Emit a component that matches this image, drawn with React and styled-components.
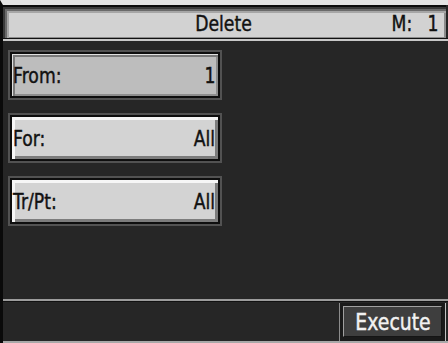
import React from "react";
import styled, { createGlobalStyle } from "styled-components";

const Global = createGlobalStyle`
  html, body { margin: 0; padding: 0; background: #e6e6e6; }
  body { font-family: "DejaVu Sans", "Liberation Sans", sans-serif; }
`;

const Screen = styled.div`
  width: 448px;
  height: 343px;
  box-sizing: border-box;
  border-top: 5px solid #e4e4e4;
  border-left: 3px solid #0a0a0a;
  background: #262626;
  display: flex;
  flex-direction: column;
  overflow: hidden;
`;

const Narrow = styled.span`
  display: inline-block;
  transform: scaleX(0.82);
  transform-origin: ${(p) => p.$origin || "center"};
  white-space: nowrap;
  -webkit-text-stroke: 0.45px currentColor;
`;

const Header = styled.div`
  height: 33px;
  box-sizing: border-box;
  margin-right: 2px;
  border-top: 2px solid #0c0c0c;
  background: #d2d2d2;
  box-shadow: inset 2px 2px 0 #3a3a3a, inset 4px 4px 0 #6a6a6a,
    inset 6px 6px 0 #a6a6a6, inset -2px -1px 0 #8c8c8c;
  display: grid;
  grid-template-columns: 1fr auto 1fr;
  align-items: center;
  padding: 3px 8px 0 6px;
  color: #111;
  font-size: 21px;
  line-height: 1;
`;

const Title = styled.div`
  grid-column: 2;
`;

const Measure = styled.div`
  grid-column: 3;
  justify-self: end;
  display: flex;
  gap: 12px;
`;

const HeaderRule = styled.div`
  height: 3px;
  box-sizing: border-box;
  border-top: 1px solid #111;
  border-bottom: 2px solid #c8c8c8;
  margin-left: -3px;
`;

const Params = styled.div`
  display: flex;
  flex-direction: column;
  gap: 13px;
  padding: 9px 0 0 5px;
`;

const ParamFrame = styled.div`
  width: 214px;
  height: 50px;
  box-sizing: border-box;
  border: 2px solid #525252;
  background: #0e0e0e;
  padding: 2px;
`;

const ParamFace = styled.div`
  height: 100%;
  box-sizing: border-box;
  display: flex;
  align-items: center;
  justify-content: space-between;
  padding: 2px 3px 0 1px;
  background: ${(p) => (p.$pressed ? "#bdbdbd" : "#d3d3d3")};
  box-shadow: ${(p) =>
    p.$pressed
      ? "inset 1px 1px 0 #e0e0e0, inset 3px 3px 0 #7a7a7a, inset -2px -2px 0 #8e8e8e"
      : "inset 3px 3px 0 #f6f6f6, inset -3px -3px 0 #7c7c7c"};
  color: #111;
  font-size: 21px;
  line-height: 1;
`;

const Spacer = styled.div`
  flex: 1;
`;

const FooterRule = styled.div`
  height: 3px;
  box-sizing: border-box;
  border-top: 2px solid #9c9c9c;
  border-bottom: 1px solid #111;
`;

const Footer = styled.div`
  height: 39px;
  display: flex;
  justify-content: flex-end;
  align-items: flex-end;
  padding-right: 2px;
`;

const ExecFrame = styled.div`
  width: 107px;
  height: 38px;
  box-sizing: border-box;
  border-left: 1px solid #8c8c8c;
  border-right: 1px solid #c0c0c0;
  padding: 3px 3px 4px 3px;
  background: #1a1a1a;
`;

const ExecButton = styled.div`
  height: 100%;
  box-sizing: border-box;
  background: #3e3e3e;
  border: 1px solid;
  border-color: #a0a0a0 #151515 #151515 #a0a0a0;
  display: flex;
  align-items: center;
  justify-content: center;
  color: #f2f2f2;
  font-size: 23px;
  line-height: 1;
  padding-top: 1px;
`;

const BottomRule = styled.div`
  height: 2px;
  background: #a8a8a8;
`;

const params = [
  { label: "From:", value: "1", pressed: true },
  { label: "For:", value: "All" },
  { label: "Tr/Pt:", value: "All" },
];

export default function App() {
  return (
    <>
      <Global />
      <Screen>
        <Header>
          <Title>
            <Narrow>Delete</Narrow>
          </Title>
          <Measure>
            <Narrow $origin="right">M:</Narrow>
            <Narrow $origin="right">1</Narrow>
          </Measure>
        </Header>
        <HeaderRule />
        <Params>
          {params.map((p) => (
            <ParamFrame key={p.label}>
              <ParamFace $pressed={p.pressed}>
                <Narrow $origin="left">{p.label}</Narrow>
                <Narrow $origin="right">{p.value}</Narrow>
              </ParamFace>
            </ParamFrame>
          ))}
        </Params>
        <Spacer />
        <FooterRule />
        <Footer>
          <ExecFrame>
            <ExecButton>
              <Narrow>Execute</Narrow>
            </ExecButton>
          </ExecFrame>
        </Footer>
        <BottomRule />
      </Screen>
    </>
  );
}
